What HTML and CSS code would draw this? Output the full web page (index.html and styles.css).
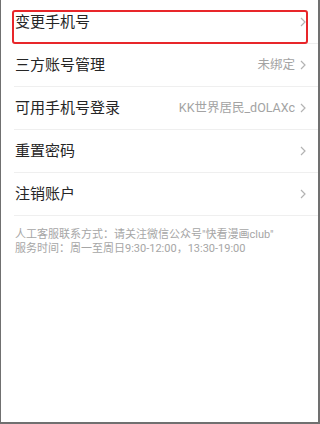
FILE: index.html
```html
<!DOCTYPE html>
<html lang="zh">
<head>
<meta charset="utf-8">
<link rel="stylesheet" href="styles.css">
</head>
<body>
<div class="frame">
  <ul class="list">
    <li class="row">
      <span class="title">变更手机号</span>
      <span class="right"><svg class="chev" width="6" height="10" viewBox="0 0 6 10"><polyline points="1,1 5,5 1,9" fill="none" stroke="#b3b3b3" stroke-width="1.2"/></svg></span>
    </li>
    <li class="row">
      <span class="title">三方账号管理</span>
      <span class="right"><span class="value">未绑定</span><svg class="chev" width="6" height="10" viewBox="0 0 6 10"><polyline points="1,1 5,5 1,9" fill="none" stroke="#b3b3b3" stroke-width="1.2"/></svg></span>
    </li>
    <li class="row">
      <span class="title">可用手机号登录</span>
      <span class="right"><span class="value">KK世界居民_dOLAXc</span><svg class="chev" width="6" height="10" viewBox="0 0 6 10"><polyline points="1,1 5,5 1,9" fill="none" stroke="#b3b3b3" stroke-width="1.2"/></svg></span>
    </li>
    <li class="row">
      <span class="title">重置密码</span>
      <span class="right"><svg class="chev" width="6" height="10" viewBox="0 0 6 10"><polyline points="1,1 5,5 1,9" fill="none" stroke="#b3b3b3" stroke-width="1.2"/></svg></span>
    </li>
    <li class="row">
      <span class="title">注销账户</span>
      <span class="right"><svg class="chev" width="6" height="10" viewBox="0 0 6 10"><polyline points="1,1 5,5 1,9" fill="none" stroke="#b3b3b3" stroke-width="1.2"/></svg></span>
    </li>
  </ul>
  <div class="note">
    <p>人工客服联系方式：请关注微信公众号"快看漫画club"</p>
    <p>服务时间：周一至周日9:30-12:00，13:30-19:00</p>
  </div>
  <div class="highlight"></div>
</div>
</body>
</html>
```
FILE: styles.css
```css
* { box-sizing: border-box; }
html, body { margin: 0; padding: 0; background: #fff; }
body { font-family: Roboto, "Noto Sans CJK SC", sans-serif; }
.frame {
  position: relative;
  width: 320px;
  height: 424px;
  border-left: 1px solid #707070;
  border-right: 2px solid #707070;
  border-bottom: 2px solid #707070;
  padding-top: 1px;
}
.list { list-style: none; margin: 0; padding: 0; }
.row {
  display: flex;
  align-items: center;
  justify-content: space-between;
  height: 43px;
  margin-left: 13px;
  padding-right: 12px;
  padding-left: 1px;
  border-bottom: 1px solid #efefef;
}
.title { font-size: 15px; color: #262626; line-height: 20px; }
.right { display: flex; align-items: center; gap: 5px; }
.value { font-size: 12.5px; color: #a3a3a3; line-height: 16px; }
.chev { display: block; }
.note { padding: 12px 0 0 14px; }
.note p { margin: 0; font-size: 11px; line-height: 14px; height: 14px; color: #a6a6a6; }
.highlight {
  position: absolute;
  left: 11px;
  top: 10px;
  width: 296px;
  height: 34px;
  border: 2px solid #e8262a;
  border-radius: 3px;
}
```
